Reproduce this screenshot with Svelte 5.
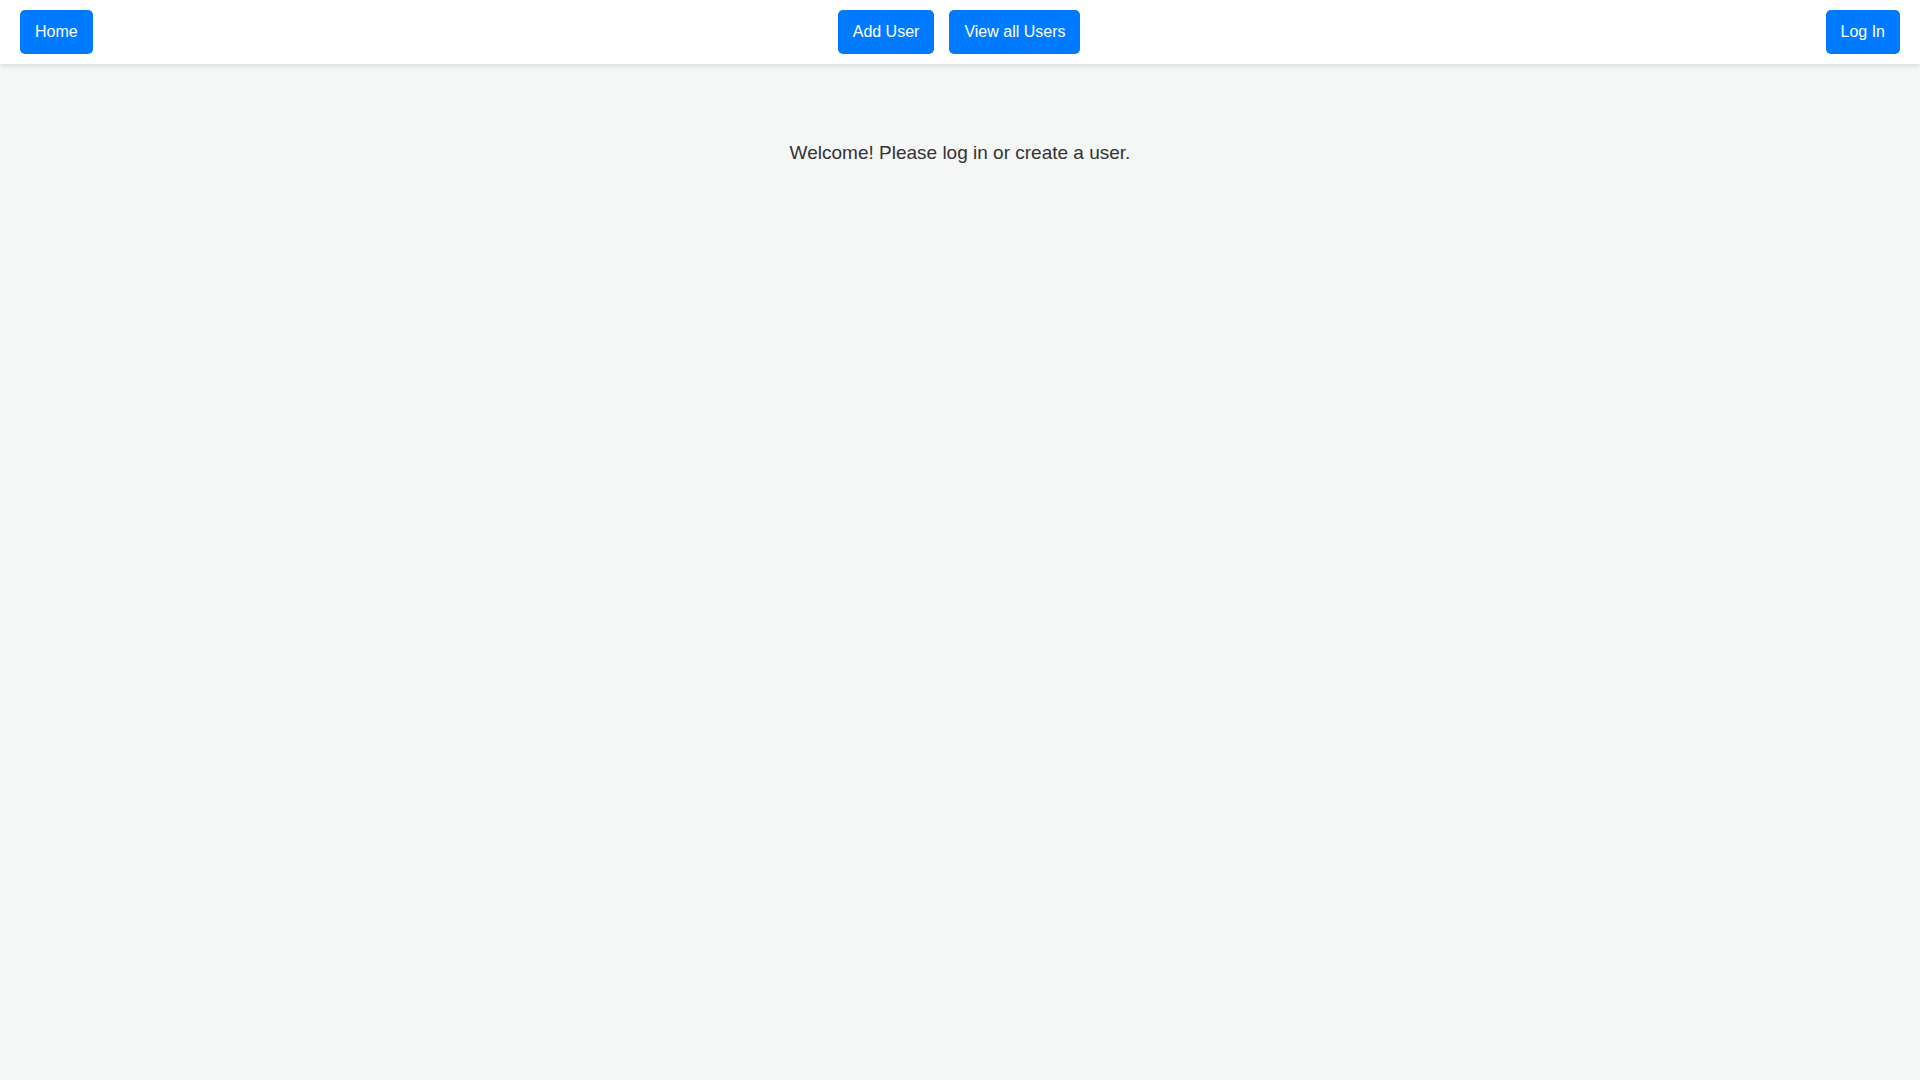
<script lang="ts">
	let message = $state("Welcome! Please log in or create a user.");
</script>

<nav class="navbar">
	<div class="nav-group">
		<a class="nav-button" href="#/">Home</a>
	</div>
	<div class="nav-group">
		<a class="nav-button" href="#/users/add">Add User</a>
		<a class="nav-button" href="#/users">View all Users</a>
	</div>
	<div class="nav-group">
		<a class="nav-button" href="#/login">Log In</a>
	</div>
</nav>

<main class="content">
	<p class="welcome">{message}</p>
</main>

<style>
	:global(body) {
		margin: 0;
		background-color: #f4f7f6;
		color: #333;
		font-family: "Liberation Sans", Arial, sans-serif;
		font-size: 16px;
		line-height: 24px;
	}

	.navbar {
		display: flex;
		justify-content: space-between;
		align-items: center;
		padding: 10px 20px;
		background-color: #fff;
		box-shadow: 0 2px 4px rgba(0, 0, 0, 0.1);
	}

	.nav-group {
		display: flex;
		gap: 15px;
	}

	.nav-button {
		padding: 10px 15px;
		border-radius: 5px;
		background-color: #007bff;
		color: #fff;
		text-decoration: none;
	}

	.nav-button:hover {
		background-color: #0056b3;
	}

	.content {
		padding: 75px 20px;
		text-align: center;
	}

	.welcome {
		margin: 0;
		font-size: 19px;
		line-height: 28px;
	}
</style>
